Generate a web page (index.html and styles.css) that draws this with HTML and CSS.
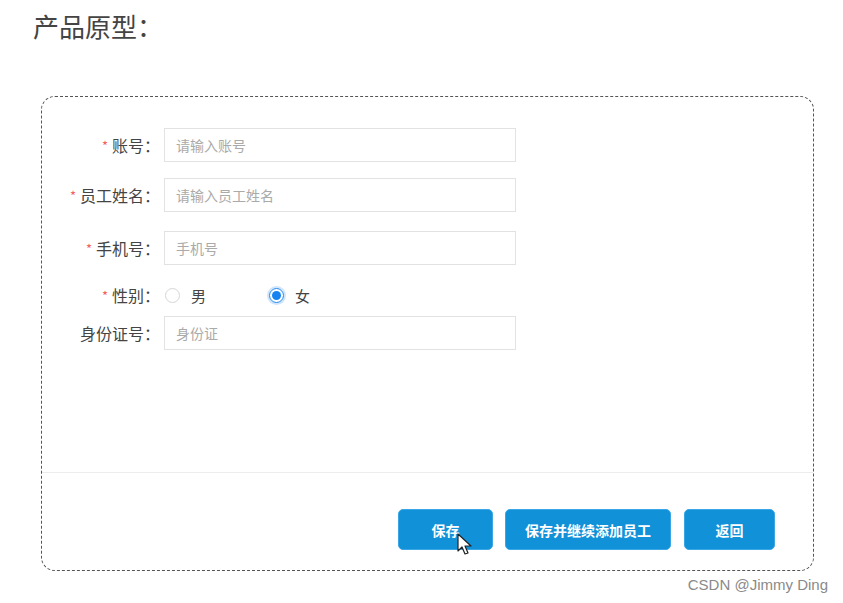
FILE: index.html
```html
<!DOCTYPE html>
<html lang="zh">
<head>
<meta charset="utf-8">
<title>产品原型</title>
<link rel="stylesheet" href="styles.css">
</head>
<body>
<h1 class="title">产品原型：</h1>
<div class="card">
  <div class="form">
    <div class="row row-1">
      <label class="label"><span class="req">*</span>账号：</label>
      <div class="input">请输入账号</div>
    </div>
    <div class="row row-2">
      <label class="label"><span class="req">*</span>员工姓名：</label>
      <div class="input">请输入员工姓名</div>
    </div>
    <div class="row row-3">
      <label class="label"><span class="req">*</span>手机号：</label>
      <div class="input">手机号</div>
    </div>
    <div class="row row-radio">
      <label class="label"><span class="req">*</span>性别：</label>
      <div class="radios">
        <span class="radio"><span class="dot"></span>男</span>
        <span class="radio checked"><span class="dot"></span>女</span>
      </div>
    </div>
    <div class="row row-5">
      <label class="label">身份证号：</label>
      <div class="input">身份证</div>
    </div>
  </div>
  <div class="footer">
    <button class="btn btn-save">保存
      <svg class="cursor" width="16" height="24" viewBox="0 0 16 24"><path d="M1 1 L1 18 L5 14 L8 21 L11 20 L8 13 L14 13 Z" fill="#fff" stroke="#222" stroke-width="1.2" stroke-linejoin="round"/></svg>
    </button>
    <button class="btn btn-wide">保存并继续添加员工</button>
    <button class="btn btn-back">返回</button>
  </div>
</div>
<div class="mark">CSDN @Jimmy Ding</div>
</body>
</html>
```
FILE: styles.css
```css
* { box-sizing: border-box; }
html, body { margin: 0; padding: 0; background: #fff; }
body {
  width: 843px;
  height: 603px;
  font-family: "Noto Sans CJK SC", "Noto Sans", sans-serif;
  color: #333;
  overflow: hidden;
}
.title {
  margin: 8px 0 0 33px;
  font-size: 26px;
  line-height: 36px;
  font-weight: 400;
  color: #444;
}
.card {
  margin: 52px 0 0 41px;
  width: 773px;
  height: 475px;
  border: 1px dashed #555;
  border-radius: 14px;
  display: flex;
  flex-direction: column;
}
.form {
  flex: 1;
  padding-top: 31px;
  display: flex;
  flex-direction: column;
}
.row {
  display: flex;
  align-items: center;
}
.row-2 { margin-top: 16px; }
.row-3 { margin-top: 19px; }
.row-radio { margin-top: 18px; height: 24px; }
.row-5 { margin-top: 9px; }
.label {
  width: 118px;
  text-align: right;
  font-size: 16px;
  color: #444;
  margin-right: 4px;
  white-space: nowrap;
}
.req {
  color: #f2625b;
  font-size: 13px;
  margin-right: 4px;
  position: relative;
  top: -1px;
}
.input {
  width: 352px;
  height: 34px;
  border: 1px solid #e2e2e2;
  padding-left: 11px;
  font-size: 14px;
  line-height: 32px;
  color: #aaa;
}
.radios {
  display: flex;
  align-items: center;
  padding-left: 1px;
}
.radio {
  display: flex;
  align-items: center;
  font-size: 15px;
  color: #444;
  width: 104px;
}
.dot {
  width: 15px;
  height: 15px;
  border: 1px solid #d6d6d6;
  border-radius: 50%;
  margin-right: 11px;
  position: relative;
}
.radio.checked .dot {
  border: 1px solid #1e88f0;
  box-shadow: 0 0 0 2px #cfe5fb;
}
.radio.checked .dot::after {
  content: "";
  position: absolute;
  left: 2px;
  top: 2px;
  width: 9px;
  height: 9px;
  border-radius: 50%;
  background: #1683f0;
}
.footer {
  height: 98px;
  border-top: 1px solid #ececec;
  display: flex;
  justify-content: flex-end;
  align-items: flex-start;
  padding: 36px 38px 0 0;
  gap: 12px;
}
.btn {
  position: relative;
  height: 41px;
  border: 1px solid #3aa6e6;
  border-radius: 5px;
  background: #1191d8;
  color: #fff;
  font-family: "Noto Sans CJK SC", sans-serif;
  font-size: 14px;
  font-weight: 700;
  padding: 0;
}
.btn-save { width: 95px; }
.btn-wide { width: 166px; }
.btn-back { width: 91px; margin-left: 1px; }
.cursor {
  position: absolute;
  left: 58px;
  top: 23px;
}
.mark {
  text-align: right;
  padding-right: 15px;
  margin-top: 5px;
  font-family: "Liberation Sans", sans-serif;
  font-size: 15px;
  color: #8a8a8a;
}
```
